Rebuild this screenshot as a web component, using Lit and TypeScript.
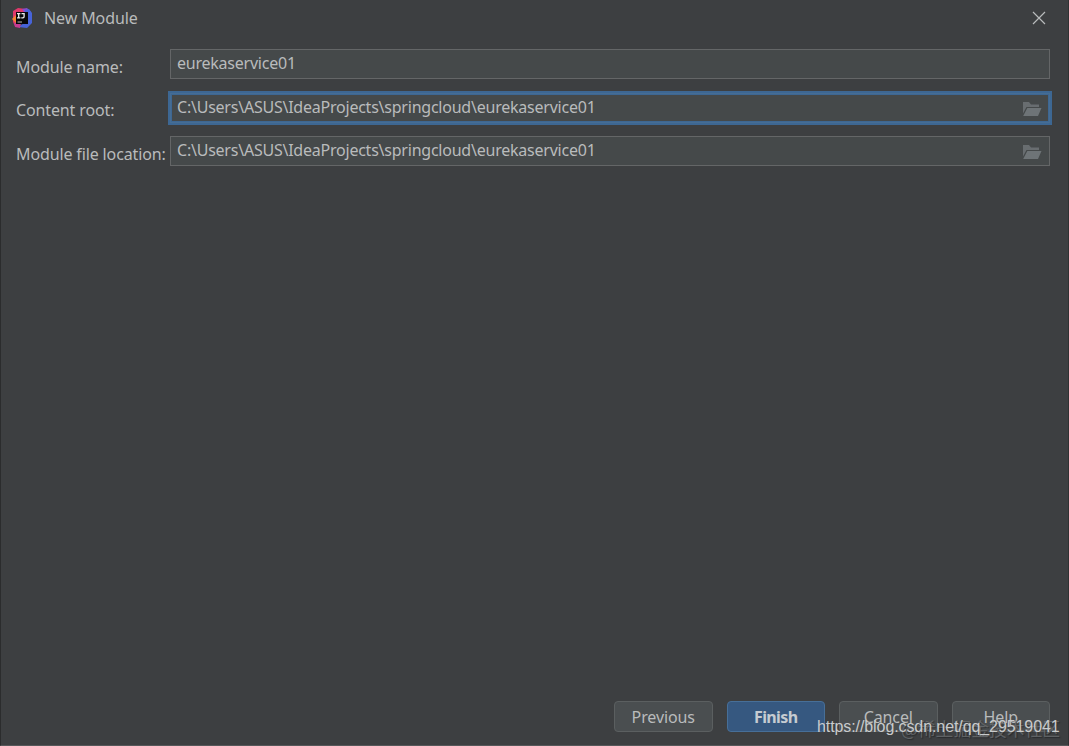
import { LitElement, html, css, nothing } from "lit";
import { customElement, property } from "lit/decorators.js";

@customElement("path-field")
class PathField extends LitElement {
  @property() label = "";
  @property() value = "";
  @property({ type: Boolean }) browse = false;
  @property({ type: Boolean, reflect: true }) focused = false;

  static styles = css`
    :host {
      display: flex;
      height: 30px;
      padding-left: 16px;
      padding-right: 19px;
    }
    .label {
      flex: none;
      width: 154px;
      padding-top: 3px;
      line-height: 30px;
      letter-spacing: -0.13px;
      white-space: nowrap;
    }
    :host([focused]) .label {
      padding-top: 2px;
    }
    .box {
      box-sizing: border-box;
      flex: 1;
      display: flex;
      align-items: center;
      justify-content: space-between;
      padding: 0 7px 0 6px;
      border: 1px solid #646667;
      background: #45494a;
    }
    :host([focused]) .box {
      border-color: #466d94;
      box-shadow: 0 0 0 2px #3d6793, inset 0 0 0 1px #3d6793;
    }
    .value {
      line-height: 26px;
      padding-bottom: 2px;
      letter-spacing: -0.23px;
      white-space: nowrap;
    }
    svg {
      margin-top: 2px;
    }
  `;

  render() {
    return html`
      <div class="label">${this.label}</div>
      <div class="box">
        <span class="value">${this.value}</span>
        ${this.browse
          ? html`<svg width="20" height="16" viewBox="0 0 20 16">
              <path fill="#686d70" d="M1 1h6l2 2.5h8V6H4.5L1 12.5z" />
              <path fill="#6e7477" d="M5.3 7H19.5L16 15H1.2z" />
            </svg>`
          : nothing}
      </div>
    `;
  }
}

@customElement("app-root")
class AppRoot extends LitElement {
  static styles = css`
    :host {
      box-sizing: border-box;
      display: flex;
      flex-direction: column;
      position: relative;
      width: 1069px;
      height: 746px;
      overflow: hidden;
      border-left: 1px solid #2b2c2d;
      border-right: 1px solid #303233;
      border-bottom: 1px solid #56585a;
      margin: 0;
      background: #3d3f41;
      color: #b9bbbc;
      font: 16px "Noto Sans", "Open Sans", sans-serif;
    }
    .title {
      display: flex;
      align-items: center;
      height: 36px;
      padding: 0 22px 0 11px;
    }
    .title span {
      flex: 1;
      margin-left: 12px;
      letter-spacing: -0.1px;
    }
    .form {
      display: flex;
      flex-direction: column;
      gap: 13.5px;
      padding-top: 13px;
      margin-left: -1px;
      margin-right: -1px;
      flex: 1;
    }
    .buttons {
      display: flex;
      justify-content: flex-end;
      gap: 14px;
      padding: 0 18px 13px 0;
    }
    .btn {
      box-sizing: border-box;
      width: 98.5px;
      height: 31px;
      border: 1px solid #5b5f60;
      border-radius: 4px;
      background: #4a4e50;
      text-align: center;
      line-height: 31px;
      letter-spacing: -0.1px;
    }
    .primary {
      border-color: #476f98;
      background: #365880;
      font-weight: 700;
      color: #c5cbd1;
      letter-spacing: -0.6px;
    }
    .mark {
      position: absolute;
      white-space: nowrap;
    }
    .community {
      left: 900px;
      top: 716px;
      font: 17.8px/24px "Noto Sans CJK SC", sans-serif;
      color: rgba(115, 118, 120, 0.7);
      text-shadow: 1px 1px 1px rgba(30, 32, 33, 0.6);
    }
    .blog {
      left: 816px;
      top: 717px;
      font: 16px/20px "Liberation Sans", sans-serif;
      letter-spacing: -0.09px;
      color: #c9cbcc;
    }
  `;

  render() {
    return html`
      <div class="title">
        <svg width="20" height="20" viewBox="0 0 20 20">
          <path fill="#e0386b" d="M1 3 6 0l8 1-2 8-9 9-2-4z" />
          <path fill="#f58232" d="M0 11l4-4v8z" />
          <path fill="#8a4bd0" d="M10 1l5-1 4 4-5 3z" />
          <path fill="#4763d8" d="M13 2l4-1 3 4v10l-5 5-9-1 8-5z" />
          <path fill="#c43b93" d="M2 15h7l-1 5-5-1z" />
          <rect x="4" y="4" width="12" height="12" fill="#070709" />
          <path
            fill="none"
            stroke="#eee"
            stroke-width="1.3"
            d="M5 5.6h3.4M6.7 5.6v4.2M5 9.8h3.4M9.5 5.6h2.6v3q0 1.2-1.2 1.2H9.3"
          />
          <path stroke="#bbb" d="M5.5 14h4.5" />
        </svg>
        <span>New Module</span>
        <svg width="14" height="14" viewBox="0 0 14 14">
          <path stroke="#b9bbbc" stroke-width="1.2" d="M1 1l12 12M13 1L1 13" />
        </svg>
      </div>
      <div class="form">
        <path-field label="Module name:" value="eurekaservice01"></path-field>
        <path-field
          label="Content root:"
          value="C:\\Users\\ASUS\\IdeaProjects\\springcloud\\eurekaservice01"
          browse
          focused
        ></path-field>
        <path-field
          label="Module file location:"
          value="C:\\Users\\ASUS\\IdeaProjects\\springcloud\\eurekaservice01"
          browse
        ></path-field>
      </div>
      <div class="buttons">
        <div class="btn">Previous</div>
        <div class="btn primary">Finish</div>
        <div class="btn">Cancel</div>
        <div class="btn">Help</div>
      </div>
      <div class="mark community">@稀土掘金技术社区</div>
      <div class="mark blog">https://blog.csdn.net/qq_29519041</div>
    `;
  }
}
